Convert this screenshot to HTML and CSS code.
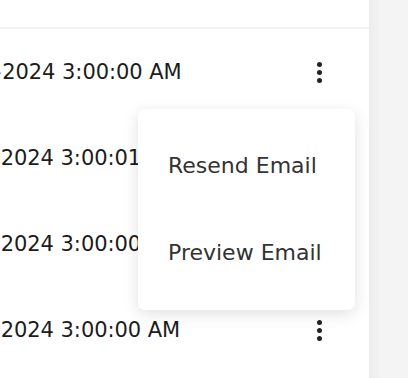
FILE: index.html
```html
<!DOCTYPE html>
<html>
<head>
<meta charset="utf-8">
<link rel="stylesheet" href="styles.css">
</head>
<body>
<div class="layout">
  <div class="panel">
    <div class="head"></div>
    <div class="row"><span class="date first"><span class="pre">1/1-</span>2024 3:00:00 AM</span><span class="kebab"><i></i><i></i><i></i></span></div>
    <div class="row"><span class="date"><span class="pre">1/1/</span>2024 3:00:01 AM</span><span class="kebab"><i></i><i></i><i></i></span></div>
    <div class="row"><span class="date"><span class="pre">1/1/</span>2024 3:00:00 AM</span><span class="kebab"><i></i><i></i><i></i></span></div>
    <div class="row"><span class="date"><span class="pre">1/1/</span>2024 3:00:00 AM</span><span class="kebab"><i></i><i></i><i></i></span></div>
    <div class="menu">
      <div class="item">Resend Email</div>
      <div class="item">Preview Email</div>
    </div>
  </div>
  <div class="side"></div>
</div>
</body>
</html>
```
FILE: styles.css
```css
html, body {
  margin: 0;
  padding: 0;
  background: #ffffff;
}
body {
  font-family: "DejaVu Sans", "Liberation Sans", sans-serif;
  color: #1c1c1c;
}
.layout {
  display: flex;
  height: 378px;
  overflow: hidden;
}
.panel {
  position: relative;
  width: 369px;
  flex: none;
  background: #fff;
  overflow: hidden;
}
.side {
  flex: 1;
  background: linear-gradient(to right, #ececec, #f4f4f4 12px, #f4f4f4);
}
.head {
  height: 27px;
  border-bottom: 2px solid #f2f2f2;
}
.row {
  height: 86px;
  display: flex;
  align-items: center;
  justify-content: space-between;
  padding-right: 45px;
}
.date {
  font-size: 21px;
  white-space: nowrap;
  margin-left: -45px;
  letter-spacing: -0.05px;
}
.date .pre {
  margin-right: 5px;
}
.date.first {
  margin-left: -40px;
}
.date.first .pre {
  margin-right: 1px;
}
.kebab {
  display: flex;
  flex-direction: column;
  gap: 3px;
  width: 10px;
  align-items: center;
}
.kebab i {
  display: block;
  width: 5px;
  height: 5px;
  border-radius: 50%;
  background: #222;
}
.menu {
  position: absolute;
  left: 138px;
  top: 109px;
  width: 217px;
  padding: 13px 0 14px;
  background: #fff;
  border-radius: 7px;
  box-shadow: 0 4px 16px rgba(0,0,0,0.12);
}
.item {
  height: 87px;
  display: flex;
  align-items: center;
  padding-left: 30px;
  font-size: 22px;
  color: #333;
}
```
